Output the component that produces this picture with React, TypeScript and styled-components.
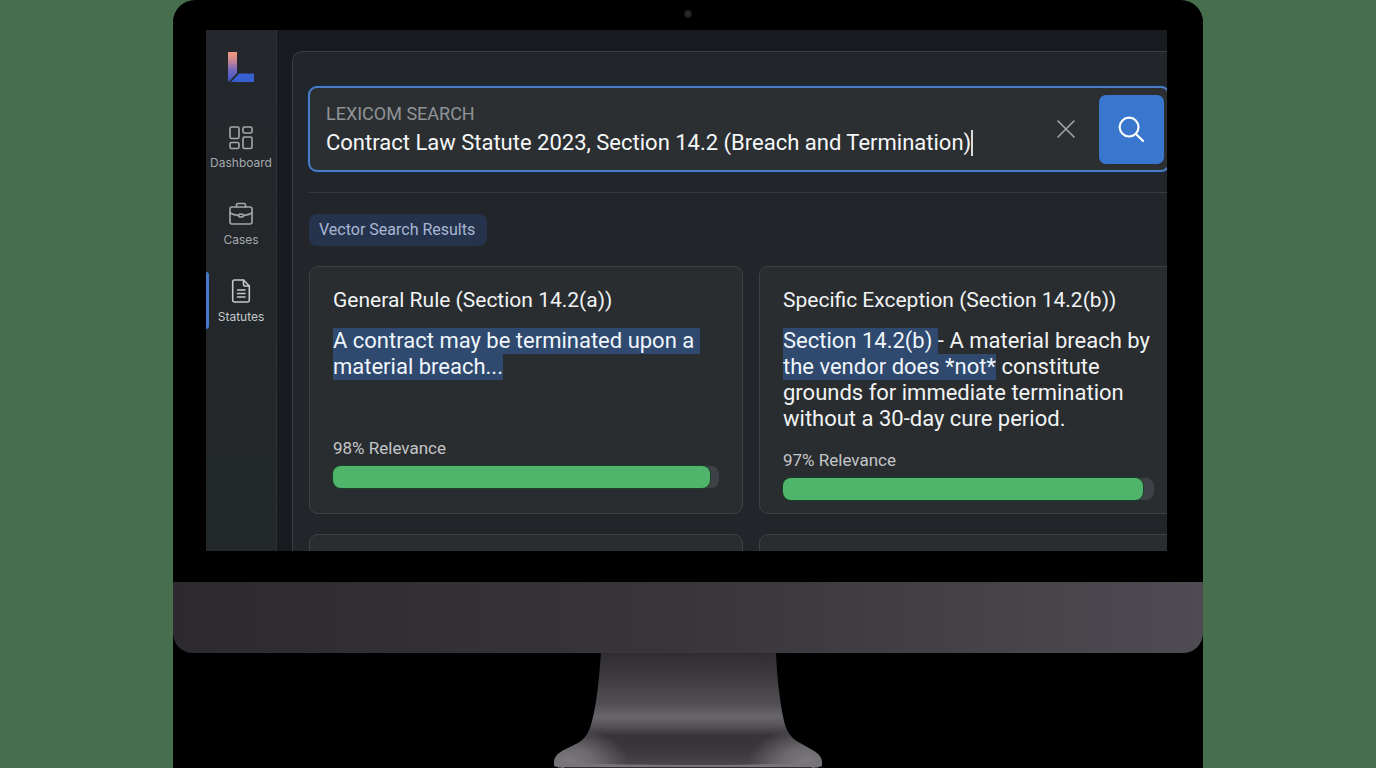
import React from "react";
import styled, { createGlobalStyle } from "styled-components";

const GlobalStyle = createGlobalStyle`
  *, *::before, *::after { box-sizing: border-box; }
  body {
    margin: 0;
    background: #486f4d;
    font-family: Roboto, Inter, "Liberation Sans", sans-serif;
    color: #f1f3f4;
  }
  h2, p { margin: 0; font-weight: 400; }
`;

const Page = styled.div`
  min-height: 100vh;
  padding: 0 173px;
  display: flex;
`;

const Backdrop = styled.div`
  flex: 1;
  min-width: 0;
  display: flex;
  flex-direction: column;
  background: #000;
  border-radius: 22px 22px 0 0;
`;

const Bezel = styled.div`
  padding: 0 36px 31px 33px;
`;

const CameraBar = styled.div`
  height: 30px;
  display: flex;
  align-items: center;
  justify-content: center;
  padding-right: 3px;
  padding-left: 6px;
`;

const Camera = styled.span`
  width: 8px;
  height: 8px;
  margin-bottom: 2px;
  border-radius: 50%;
  border: 2px solid #1b1c1e;
  background: #2b2d30;
`;

const Screen = styled.div`
  display: flex;
  aspect-ratio: 961 / 521;
  overflow: hidden;
  background: #171b20;
`;

const Sidebar = styled.nav`
  flex: none;
  width: 71px;
  display: flex;
  flex-direction: column;
  align-items: stretch;
  padding-top: 22px;
  background: linear-gradient(#24282c, #22272a);
  border-right: 1px solid #2f3338;
`;

const Logo = styled.svg`
  width: 26px;
  height: 30px;
  align-self: center;
  margin-bottom: 36px;
`;

const NavList = styled.div`
  display: flex;
  flex-direction: column;
  gap: 20px;
`;

const NavLink = styled.a<{ $active?: boolean }>`
  position: relative;
  height: 57px;
  display: flex;
  flex-direction: column;
  align-items: center;
  justify-content: flex-end;
  gap: 4px;
  padding-bottom: 4px;
  color: ${(p) => (p.$active ? "#c4c7c9" : "#a4a8ab")};
  font-family: Inter, "Liberation Sans", sans-serif;
  font-size: 12px;
  line-height: 16px;
  text-decoration: none;

  &::before {
    content: "";
    display: ${(p) => (p.$active ? "block" : "none")};
    position: absolute;
    left: 0;
    top: 0;
    width: 3px;
    height: 100%;
    border-radius: 0 3px 3px 0;
    background: #4779cc;
  }
`;

const NavIcon = styled.svg`
  width: 26px;
  height: 26px;
  fill: none;
  stroke: currentColor;
  stroke-width: 1.6;
  stroke-linecap: round;
  stroke-linejoin: round;
`;

const Main = styled.main`
  flex: 1;
  min-width: 0;
  padding: 21px 0 0 15px;
`;

const Panel = styled.section`
  height: 100%;
  margin-right: -11px;
  padding: 34px 0 0 16px;
  background: #22262a;
  border: 1px solid #3a3f43;
  border-width: 1px 0 0 1px;
  border-radius: 10px 0 0 0;
`;

const SearchBox = styled.form`
  display: flex;
  align-items: center;
  height: 86px;
  margin: 0 8px 0 -1px;
  padding: 0 4px 0 16px;
  background: #2b2f32;
  border: 2px solid #4b7dc4;
  border-radius: 9px;
  box-shadow: 0 0 1px 1px #182b4a;
`;

const Field = styled.div`
  flex: 1;
  min-width: 0;
`;

const FieldLabel = styled.label`
  display: block;
  color: #909497;
  font-size: 18px;
  line-height: 28px;
`;

const InputLine = styled.div`
  display: flex;
  align-items: center;
`;

const QueryInput = styled.input`
  field-sizing: content;
  min-width: 0;
  padding: 0;
  border: 0;
  outline: 0;
  background: none;
  color: #f6f7f8;
  font: inherit;
  font-size: 22px;
  line-height: 30px;
`;

const Caret = styled.span`
  width: 2px;
  height: 26px;
  background: #d8dadb;
`;

const ClearButton = styled.button`
  flex: none;
  width: 32px;
  height: 32px;
  margin-right: 17px;
  padding: 7px;
  border: 0;
  background: none;
  color: #a3a6a8;
`;

const SubmitButton = styled.button`
  flex: none;
  width: 65px;
  height: 69px;
  padding: 0;
  display: flex;
  align-items: center;
  justify-content: center;
  border: 0;
  border-radius: 7px;
  background: #3977cf;
  color: #fff;
`;

const LineIcon = styled.svg`
  display: block;
  fill: none;
  stroke: currentColor;
  stroke-linecap: round;
`;

const Divider = styled.hr`
  height: 1px;
  margin: 20px 0 21px;
  border: 0;
  background: #373b3e;
`;

const Chip = styled.div`
  width: fit-content;
  padding: 0 12px 0 10px;
  border-radius: 8px;
  background: #25334c;
  color: #a9b7d4;
  font-size: 16px;
  line-height: 32px;
`;

const Grid = styled.div`
  display: grid;
  grid-template-columns: minmax(0, 434fr) minmax(0, 419fr);
  gap: 20px 16px;
  margin-top: 20px;
`;

const Card = styled.article`
  min-height: 248px;
  display: flex;
  flex-direction: column;
  padding: 20px 23px 13px;
  background: #292d30;
  border: 1px solid #3c4144;
  border-radius: 9px;
`;

const CardTitle = styled.h2`
  font-size: 21px;
  line-height: 26px;
`;

const Excerpt = styled.p`
  min-height: 92px;
  margin: 15px 0 17px;
  font-size: 22px;
  line-height: 26px;
  white-space: nowrap;
`;

const Highlight = styled.mark`
  padding-bottom: 1px;
  background: #30496f;
  color: #eff6fb;
`;

const Relevance = styled.span`
  color: #c3c6c8;
  font-size: 17px;
  line-height: 22px;
  margin-bottom: 7px;
`;

const Track = styled.div`
  height: 22px;
  border-radius: 8px;
  background: #3e4247;
`;

const Bar = styled.div`
  height: 100%;
  border-radius: 8px;
  background: #4eb56b;
  box-shadow: 0 0 1px 1px #1d4229;
`;

const Chin = styled.div`
  height: 71px;
  border-radius: 0 0 20px 20px;
  background: linear-gradient(90deg, #2d2a2f, #38363b 50%, #4e4c52);
`;

const Stand = styled.svg`
  display: block;
  width: 268px;
  height: 115px;
  margin: 0 auto;
`;

type Result = {
  title: string;
  excerpt: React.ReactNode;
  relevance: number;
  filled: number;
};

const results: Result[] = [
  {
    title: "General Rule (Section 14.2(a))",
    excerpt: (
      <Highlight>
        A contract may be terminated upon a&nbsp;
        <br />
        material breach...
      </Highlight>
    ),
    relevance: 98,
    filled: 97.6,
  },
  {
    title: "Specific Exception (Section 14.2(b))",
    excerpt: (
      <>
        <Highlight>Section 14.2(b) </Highlight>- A material breach by
        <br />
        <Highlight>the vendor does *not*</Highlight> constitute
        <br />
        grounds for immediate termination
        <br />
        without a 30-day cure period.
      </>
    ),
    relevance: 97,
    filled: 97.1,
  },
];

function ResultCard({ title, excerpt, relevance, filled }: Result) {
  const id = `relevance-${relevance}`;
  return (
    <Card>
      <CardTitle>{title}</CardTitle>
      <Excerpt>{excerpt}</Excerpt>
      <Relevance id={id}>{relevance}% Relevance</Relevance>
      <Track role="meter" aria-labelledby={id} aria-valuenow={relevance} aria-valuemin={0} aria-valuemax={100}>
        <Bar style={{ width: `${filled}%` }} />
      </Track>
    </Card>
  );
}

export default function App() {
  return (
    <Page>
      <GlobalStyle />
      <Backdrop>
        <Bezel>
          <CameraBar>
            <Camera />
          </CameraBar>
          <Screen>
            <Sidebar>
              <Logo viewBox="0 0 26 30" aria-hidden="true">
                <defs>
                  <linearGradient id="logoStem" x1="0" y1="0" x2="0" y2="1">
                    <stop offset="0" stopColor="#f39a7c" />
                    <stop offset="0.3" stopColor="#c98594" />
                    <stop offset="0.6" stopColor="#7468bd" />
                    <stop offset="1" stopColor="#3a57c4" />
                  </linearGradient>
                </defs>
                <path d="M0 0h9v21L1 29.500L0 29Z" fill="url(#logoStem)" />
                <path d="M11 21.500H26V30H3Z" fill="#375fd0" />
              </Logo>
              <NavList>
                <NavLink href="#dashboard">
                  <NavIcon viewBox="0 0 26 26">
                    <rect x="2" y="2" width="9" height="11.500" rx="1.500" />
                    <rect x="15" y="2" width="9" height="6" rx="1.500" />
                    <rect x="2" y="17.500" width="9" height="6" rx="1.500" />
                    <rect x="15" y="12" width="9" height="11.500" rx="1.500" />
                  </NavIcon>
                  Dashboard
                </NavLink>
                <NavLink href="#cases">
                  <NavIcon viewBox="0 0 26 26">
                    <rect x="2" y="5" width="22" height="17" rx="2" />
                    <path d="M8.500 5V3a1.500 1.500 0 0 1 1.500-1.500h6a1.500 1.500 0 0 1 1.500 1.500v2" />
                    <path d="M2 11c3 1.600 5.500 2.200 8.500 2.500M24 11c-3 1.600-5.500 2.200-8.500 2.500" />
                    <ellipse cx="13" cy="13.500" rx="2.600" ry="1.500" />
                  </NavIcon>
                  Cases
                </NavLink>
                <NavLink href="#statutes" $active>
                  <NavIcon viewBox="0 0 26 26">
                    <path d="M15.500 1H6.500A1.800 1.800 0 0 0 4.700 2.800v18.400A1.800 1.800 0 0 0 6.500 23h13a1.800 1.800 0 0 0 1.800-1.800V7Z" />
                    <path d="M15.500 1V5.500A1.500 1.500 0 0 0 17 7h4.300M9.500 11h7.500M9.500 14.500h7.500M9.500 18h7.500" />
                  </NavIcon>
                  Statutes
                </NavLink>
              </NavList>
            </Sidebar>
            <Main>
              <Panel>
                <SearchBox>
                  <Field>
                    <FieldLabel htmlFor="query">LEXICOM SEARCH</FieldLabel>
                    <InputLine>
                      <QueryInput
                        id="query"
                        type="text"
                        defaultValue="Contract Law Statute 2023, Section 14.2 (Breach and Termination)"
                      />
                      <Caret />
                    </InputLine>
                  </Field>
                  <ClearButton type="button" aria-label="Clear">
                    <LineIcon width="18" height="18" viewBox="0 0 18 18" strokeWidth="1.6">
                      <path d="M1 1l16 16M17 1L1 17" />
                    </LineIcon>
                  </ClearButton>
                  <SubmitButton type="button" aria-label="Search">
                    <LineIcon width="27" height="27" viewBox="0 0 28 28" strokeWidth="2.200">
                      <circle cx="11.500" cy="11.500" r="9.800" />
                      <path d="M18.600 18.600L26 26" />
                    </LineIcon>
                  </SubmitButton>
                </SearchBox>
                <Divider />
                <Chip>Vector Search Results</Chip>
                <Grid>
                  {results.map((r) => (
                    <ResultCard key={r.title} {...r} />
                  ))}
                  <Card />
                  <Card />
                </Grid>
              </Panel>
            </Main>
          </Screen>
        </Bezel>
        <Chin />
        <Stand viewBox="0 0 268 115" aria-hidden="true">
          <defs>
            <linearGradient id="standBody" x1="0" y1="0" x2="0" y2="1">
              <stop offset="0" stopColor="#2f2d32" />
              <stop offset="0.25" stopColor="#403e43" />
              <stop offset="0.45" stopColor="#514f54" />
              <stop offset="0.57" stopColor="#68666b" />
              <stop offset="0.64" stopColor="#58565b" />
              <stop offset="0.74" stopColor="#363439" />
              <stop offset="0.85" stopColor="#38363b" />
              <stop offset="1" stopColor="#48464b" />
            </linearGradient>
            <radialGradient id="sheenLeft" gradientUnits="userSpaceOnUse" cx="0" cy="0" r="1" gradientTransform="translate(14 108) scale(60 34)">
              <stop offset="0" stopColor="#7c7a7f" />
              <stop offset="0.4" stopColor="#78767b" stopOpacity="0.8" />
              <stop offset="1" stopColor="#78767b" stopOpacity="0" />
            </radialGradient>
            <radialGradient id="sheenRight" gradientUnits="userSpaceOnUse" cx="0" cy="0" r="1" gradientTransform="translate(254 108) scale(60 34)">
              <stop offset="0" stopColor="#7c7a7f" />
              <stop offset="0.4" stopColor="#78767b" stopOpacity="0.8" />
              <stop offset="1" stopColor="#78767b" stopOpacity="0" />
            </radialGradient>
            <path
              id="standShape"
              d="M47 0H222C223 25 226 50 230 68C233 80 238 86 246 90L260 98C266 102 268 105 268 110L262 112H6L0 110C0 105 2 102 8 98L24 90C31 86 35 80 38 68C43 50 45 25 47 0Z"
            />
          </defs>
          <use href="#standShape" fill="url(#standBody)" />
          <use href="#standShape" fill="url(#sheenLeft)" />
          <use href="#standShape" fill="url(#sheenRight)" />
          <path d="M0 109.500Q70 112 134 112T268 109.500V113Q264 115 258 115H10Q4 115 0 113Z" fill="#77757a" />
          <path d="M10 114.500H258" stroke="#302e33" strokeWidth="1" />
        </Stand>
      </Backdrop>
    </Page>
  );
}
